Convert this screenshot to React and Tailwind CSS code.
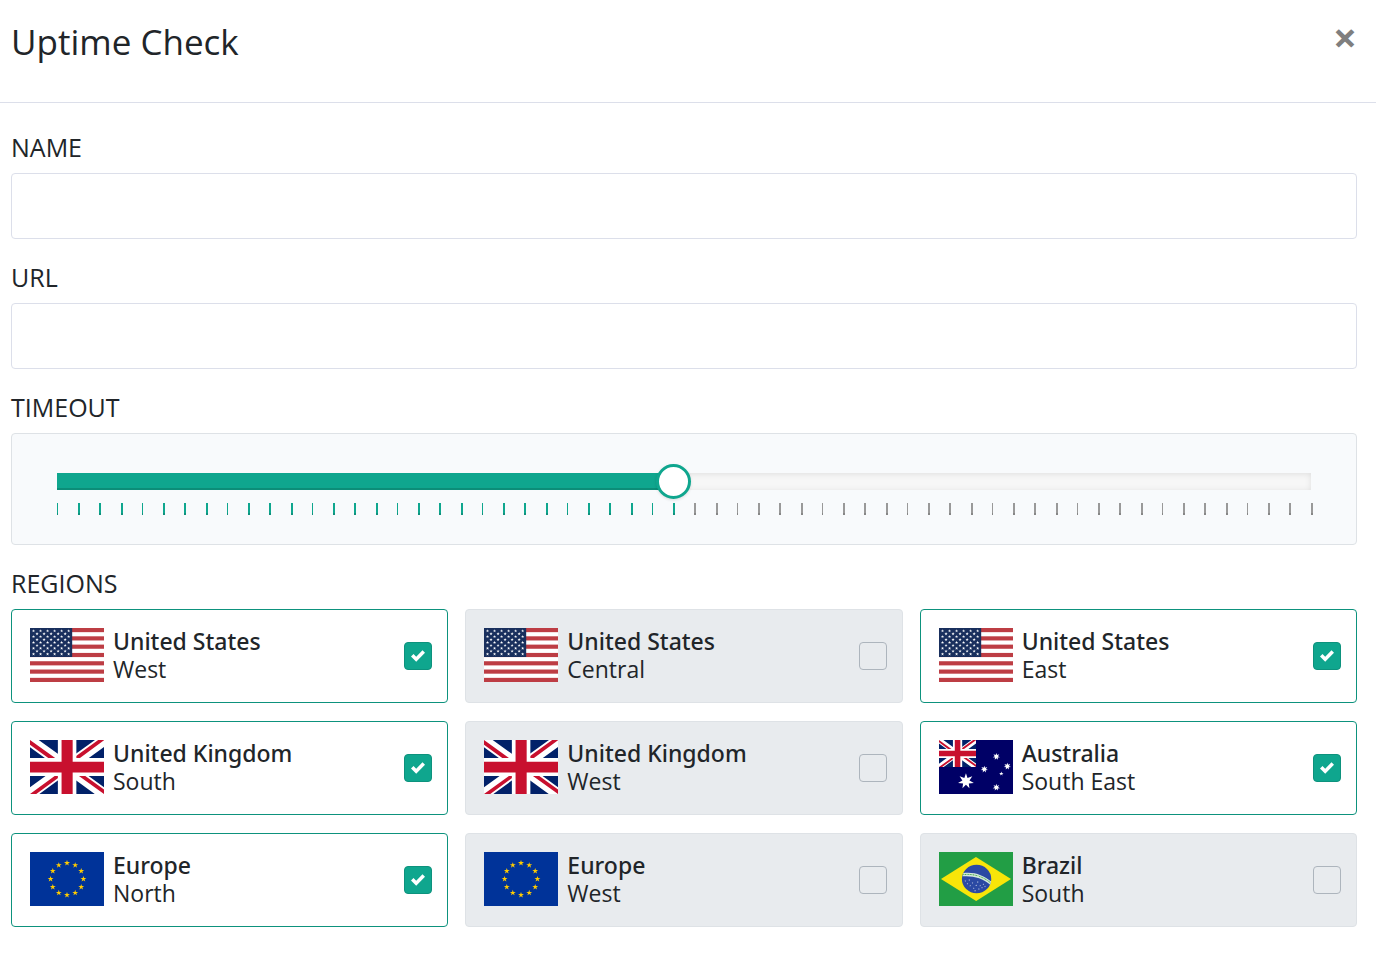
import { useState } from "react";

const MAX_TIMEOUT = 60;

const initialRegions = [
  { id: "us-west", country: "United States", area: "West", flag: "us", checked: true },
  { id: "us-central", country: "United States", area: "Central", flag: "us", checked: false },
  { id: "us-east", country: "United States", area: "East", flag: "us", checked: true },
  { id: "uk-south", country: "United Kingdom", area: "South", flag: "uk", checked: true },
  { id: "uk-west", country: "United Kingdom", area: "West", flag: "uk", checked: false },
  { id: "au-southeast", country: "Australia", area: "South East", flag: "au", checked: true },
  { id: "eu-north", country: "Europe", area: "North", flag: "eu", checked: true },
  { id: "eu-west", country: "Europe", area: "West", flag: "eu", checked: false },
  { id: "br-south", country: "Brazil", area: "South", flag: "br", checked: false },
];

// points of a star polygon, first point up
const starPoints = (cx, cy, r, points, inner) => {
  const list = [];
  for (let i = 0; i < points * 2; i++) {
    const radius = i % 2 === 0 ? r : r * inner;
    const angle = (Math.PI * i) / points - Math.PI / 2;
    list.push(`${(cx + radius * Math.cos(angle)).toFixed(1)},${(cy + radius * Math.sin(angle)).toFixed(1)}`);
  }
  return list.join(" ");
};

const Star = ({ cx, cy, r, points = 5, inner = 0.382 }) => (
  <polygon points={starPoints(cx, cy, r, points, inner)} />
);

const UnionJack = () => (
  <>
    <path fill="#012169" d="M0 0h640v480H0z" />
    <path fill="#fff" d="m75 0 244 181L562 0h78v62L400 241l240 178v61h-80L320 301 81 480H0v-60l239-178L0 64V0h75z" />
    <path fill="#c8102e" d="m424 281 216 159v40L369 281h55zm-184 20 6 35L54 480H0l240-179zM640 0v3L391 191l2-44L590 0h50zM0 0l239 176h-60L0 42V0z" />
    <path fill="#fff" d="M241 0v480h160V0H241zM0 160v160h640V160H0z" />
    <path fill="#c8102e" d="M0 193v96h640v-96H0zM273 0v480h96V0h-96z" />
  </>
);

const UnitedStates = () => {
  const stars = [];
  for (let row = 0; row < 9; row++) {
    const count = row % 2 === 0 ? 6 : 5;
    for (let col = 0; col < count; col++) {
      stars.push([(row % 2 === 0 ? 30.4 : 60.8) + col * 60.8, 25.8 + row * 25.8]);
    }
  }
  return (
    <>
      <path fill="#fff" d="M0 0h640v480H0z" />
      {[0, 2, 4, 6, 8, 10, 12].map((i) => (
        <rect key={i} fill="#bd3d44" y={i * 36.92} width="640" height="36.92" />
      ))}
      <path fill="#192f5d" d="M0 0h364.8v258.5H0z" />
      <g fill="#fff">
        {stars.map(([x, y]) => (
          <Star key={`${x}-${y}`} cx={x} cy={y} r={15} />
        ))}
      </g>
    </>
  );
};

const Australia = () => (
  <>
    <path fill="#006" d="M0 0h640v480H0z" />
    <g transform="scale(.5)">
      <UnionJack />
    </g>
    <g fill="#fff">
      <Star cx={233} cy={366} r={70} points={7} inner={0.45} />
      <Star cx={496} cy={147} r={32} points={7} inner={0.45} />
      <Star cx={392} cy={260} r={32} points={7} inner={0.45} />
      <Star cx={591} cy={234} r={32} points={7} inner={0.45} />
      <Star cx={496} cy={421} r={32} points={7} inner={0.45} />
      <Star cx={539} cy={300} r={20} />
    </g>
  </>
);

const Europe = () => (
  <>
    <path fill="#039" d="M0 0h640v480H0z" />
    <g fill="#fc0">
      {Array.from({ length: 12 }, (_, i) => (
        <Star
          key={i}
          cx={320 + 142 * Math.sin((i * Math.PI) / 6)}
          cy={240 - 142 * Math.cos((i * Math.PI) / 6)}
          r={27}
        />
      ))}
    </g>
  </>
);

const brazilStars = [
  [228, 258], [246, 282], [262, 250], [270, 300], [290, 275], [300, 322], [322, 296],
  [335, 268], [345, 330], [356, 300], [372, 318], [384, 286], [398, 306], [312, 345], [340, 215],
];

const Brazil = () => (
  <>
    <path fill="#229e45" d="M0 0h640v480H0z" />
    <path fill="#f8e509" d="m321.4 436 301.5-195.7L319.6 44 17.1 240.7 321.4 436z" />
    <circle cx="325" cy="240" r="127" fill="#2b49a3" />
    <path fill="#d5e8dc" d="M211 186c92-12 178 20 240 76l-8 28c-66-58-150-82-240-74z" />
    <path fill="none" stroke="#309e3a" strokeWidth="8" strokeDasharray="9 5" d="M210 201c90-10 172 18 236 73" />
    <g fill="#fff" fillOpacity="0.8">
      {brazilStars.map(([x, y]) => (
        <Star key={`${x}-${y}`} cx={x} cy={y} r={8} />
      ))}
    </g>
  </>
);

const flags = { us: UnitedStates, uk: UnionJack, au: Australia, eu: Europe, br: Brazil };

const Flag = ({ name }) => {
  const Drawing = flags[name];
  return (
    <svg viewBox="0 0 640 480" preserveAspectRatio="none" className="h-[54px] w-[74px] shrink-0" aria-hidden="true">
      <Drawing />
    </svg>
  );
};

const TextField = ({ id, label, value, onChange }) => (
  <div>
    <label htmlFor={id} className="block pt-[21px] pb-[9px] text-[25px] leading-[34px]">
      {label}
    </label>
    <input
      id={id}
      type="text"
      value={value}
      onChange={onChange}
      className="block h-[66px] w-full rounded-sm border border-[#dcdfea] bg-white px-5 text-2xl outline-none focus:border-[#0fa68e]"
    />
  </div>
);

const TimeoutSlider = ({ value, onChange }) => {
  const percent = ((value - 1) / (MAX_TIMEOUT - 1)) * 100;

  return (
    <div className="rounded-sm border border-[#dee2e6] bg-[#f8fafc] pt-[39px] pr-[45px] pb-[29px] pl-[45px]">
      <div className="relative h-[17px] bg-[#f7f7f7] shadow-[inset_0_1px_6px_rgba(0,0,0,0.1)]">
        <div
          className="h-full bg-[#0fa68e] shadow-[inset_0_-2px_0_rgba(0,0,0,0.15)]"
          style={{ width: `${percent}%` }}
        />
        <input
          id="timeout"
          type="range"
          min="1"
          max={MAX_TIMEOUT}
          value={value}
          onChange={onChange}
          className="absolute -top-[9px] -left-[17px] h-[35px] w-[calc(100%+35px)] cursor-pointer appearance-none bg-transparent outline-none [&::-webkit-slider-thumb]:size-[35px] [&::-webkit-slider-thumb]:appearance-none [&::-webkit-slider-thumb]:rounded-full [&::-webkit-slider-thumb]:border-3 [&::-webkit-slider-thumb]:border-[#0fa68e] [&::-webkit-slider-thumb]:bg-white [&::-webkit-slider-thumb]:shadow-[0_1px_3px_rgba(0,0,0,0.12)]"
        />
      </div>
      <div className="mt-[13px] -mr-0.5 flex h-3 justify-between" aria-hidden="true">
        {Array.from({ length: MAX_TIMEOUT }, (_, i) => (
          <span
            key={i}
            className={`shadow-[inset_0_-2px_0_rgba(0,0,0,0.12)] ${i % 4 === 0 ? "w-px" : "w-0.5"} ${
              i < value ? "bg-[#0fa68e]" : "bg-[#999999]"
            }`}
          />
        ))}
      </div>
    </div>
  );
};

const RegionCard = ({ region, onToggle }) => (
  <label
    className={`flex min-h-[94px] cursor-pointer items-start gap-[9px] rounded-sm border py-[18px] pr-[15px] pl-[18px] ${
      region.checked ? "border-[#0d927d] bg-white" : "border-[#dee2e6] bg-[#e8ebee]"
    }`}
  >
    <Flag name={region.flag} />
    <span className="flex grow flex-col gap-0.5 text-[23px] leading-[26px]">
      <span className="font-['Noto_Sans',sans-serif] font-medium">{region.country}</span>
      <span>{region.area}</span>
    </span>
    <span className="grid size-7 shrink-0 place-items-center self-center">
      <input
        type="checkbox"
        checked={region.checked}
        onChange={() => onToggle(region.id)}
        className="col-start-1 row-start-1 size-7 appearance-none rounded-sm border border-[#adb5bd] checked:border-[#0d927d] checked:bg-[#0fa68e]"
      />
      {region.checked && (
        <svg viewBox="0 0 8 8" className="pointer-events-none col-start-1 row-start-1 size-3.5" aria-hidden="true">
          <path fill="#fff" d="M6.564.75l-3.59 3.612-1.538-1.55L0 4.26 2.974 7.25 8 2.193z" />
        </svg>
      )}
    </span>
  </label>
);

const App = () => {
  const [name, setName] = useState("");
  const [url, setUrl] = useState("");
  const [timeout, setTimeoutValue] = useState(30);
  const [regions, setRegions] = useState(initialRegions);

  const handleToggle = (id) => {
    setRegions(regions.map((r) => (r.id === id ? { ...r, checked: !r.checked } : r)));
  };

  return (
    <div className="min-h-screen bg-white font-['Open_Sans',sans-serif] text-[#212529]">
      <header className="flex items-start justify-between border-b border-[#dcdfea] pt-[18px] pr-[19px] pb-9 pl-[11px]">
        <h1 className="text-[35px] leading-[48px] font-normal">Uptime Check</h1>
        <button type="button" aria-label="Close" className="cursor-pointer text-[42px] leading-[38px] font-bold text-[#7f7f7f]">
          ×
        </button>
      </header>

      <form className="pt-[6px] pr-[19px] pb-8 pl-[11px]" onSubmit={(e) => e.preventDefault()}>
        <TextField id="name" label="NAME" value={name} onChange={(e) => setName(e.target.value)} />
        <TextField id="url" label="URL" value={url} onChange={(e) => setUrl(e.target.value)} />

        <label htmlFor="timeout" className="block pt-[21px] pb-[9px] text-[25px] leading-[34px]">
          TIMEOUT
        </label>
        <TimeoutSlider value={timeout} onChange={(e) => setTimeoutValue(Number(e.target.value))} />

        <fieldset>
          <legend className="block pt-[21px] pb-[9px] text-[25px] leading-[34px]">REGIONS</legend>
          <div className="grid grid-cols-3 gap-x-[17px] gap-y-[18px]">
            {regions.map((region) => (
              <RegionCard key={region.id} region={region} onToggle={handleToggle} />
            ))}
          </div>
        </fieldset>
      </form>
    </div>
  );
};

export default App;
